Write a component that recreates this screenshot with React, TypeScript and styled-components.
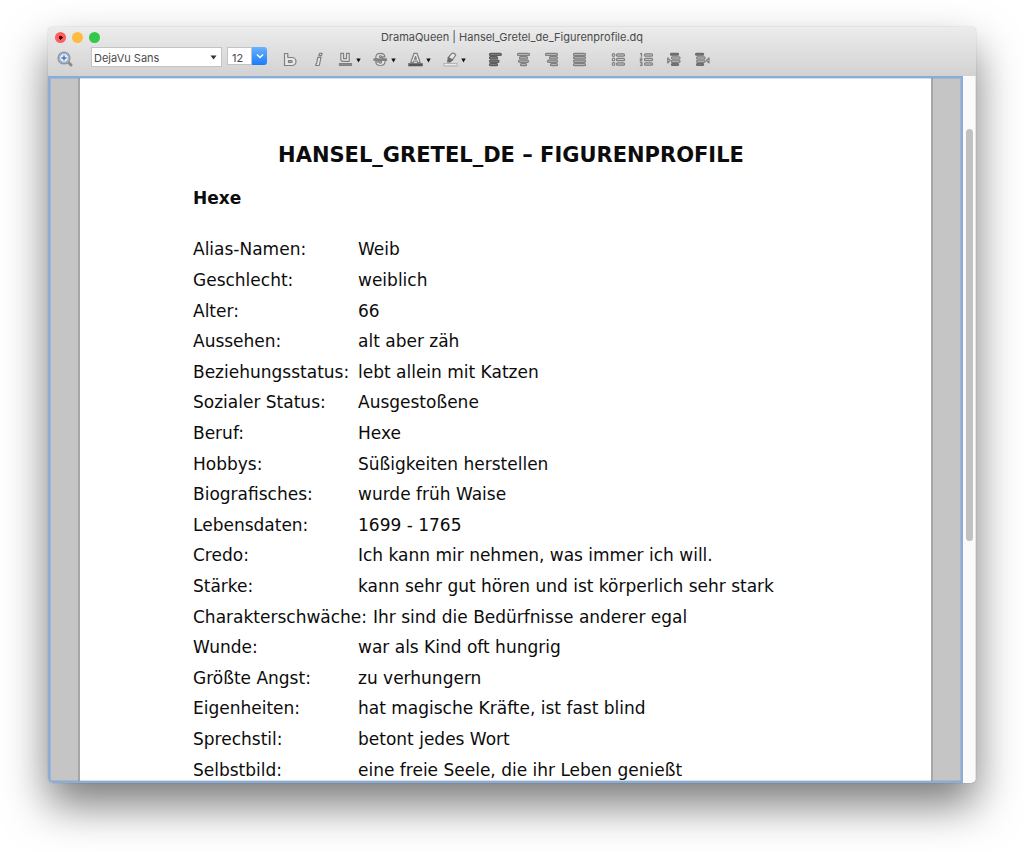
import React from "react";
import styled, { createGlobalStyle, css } from "styled-components";

const GlobalStyle = createGlobalStyle`
  *, *::before, *::after { box-sizing: border-box; }
  html, body, #root { height: 100%; }
  body { margin: 0; background: #fff; }
  button, input, select { margin: 0; font: inherit; color: inherit; }
`;

const Desktop = styled.main`
  display: flex;
  height: 100%;
  padding: 27px 48px 69px;
`;

const Window = styled.section`
  flex: 1;
  min-width: 0;
  display: flex;
  flex-direction: column;
  overflow: hidden;
  border-radius: 5px;
  background: #fafafa;
  box-shadow: 0 0 1px rgba(0, 0, 0, 0.4), 0 22px 44px rgba(0, 0, 0, 0.52);
`;

const Chrome = styled.header`
  flex: none;
  height: 49px;
  background: linear-gradient(#ececec, #d2d2d2);
  color: #4a4a4a;
  font-family: Inter, "Liberation Sans", sans-serif;
`;

const TitleBar = styled.div`
  display: grid;
  grid-template-columns: 1fr auto 1fr;
  align-items: center;
  height: 20px;
  padding: 0 7px;
`;

const Lights = styled.div`
  display: flex;
  gap: 6px;
`;

const Light = styled.button<{ $color: string; $dirty?: boolean }>`
  width: 11px;
  height: 11px;
  padding: 0;
  border: 0;
  border-radius: 50%;
  background: ${(p) =>
    p.$dirty ? `radial-gradient(circle, #4d0000 0 2px, ${p.$color} 2px)` : p.$color};
`;

const Title = styled.h1`
  margin: 0;
  font-size: 11px;
  font-weight: 400;
  line-height: 20px;
`;

const Toolbar = styled.div`
  display: flex;
  align-items: flex-start;
  height: 29px;
  padding-left: 3px;
`;

const ToolButton = styled.button<{ $wide?: boolean }>`
  flex: none;
  display: flex;
  align-items: center;
  justify-content: ${(p) => (p.$wide ? "flex-start" : "center")};
  gap: 3px;
  width: ${(p) => (p.$wide ? 35 : 28)}px;
  height: 24px;
  padding: 0;
  border: 0;
  background: none;
`;

const Group = styled.div<{ $gap: number }>`
  display: flex;
  margin-left: ${(p) => p.$gap}px;
`;

const field = css`
  height: 20px;
  border: 1px solid #c3c3c3;
  border-radius: 0;
  background: #fff;
  font-size: 11px;
`;

const FontField = styled.label`
  display: grid;
  align-items: center;
  width: 131px;
  margin-left: 12px;
  > * { grid-area: 1 / 1; }
  > svg { justify-self: end; margin-right: 5px; pointer-events: none; }
`;

const FontSelect = styled.select`
  ${field}
  appearance: none;
  width: 100%;
  padding: 2px 0 0 2px;
`;

const SizeField = styled.div`
  display: flex;
  margin-left: 5px;
`;

const SizeInput = styled.input`
  ${field}
  width: 25px;
  height: 18px;
  padding: 4px 0 0 4px;
`;

const SizeButton = styled.button`
  display: grid;
  place-items: center;
  width: 15px;
  height: 18px;
  padding: 0;
  border: 0;
  border-radius: 0 3px 3px 0;
  background: linear-gradient(#6ab3fa, #1a7bfb);
`;

const Body = styled.div`
  flex: 1;
  min-height: 0;
  display: flex;
`;

const Viewport = styled.div`
  position: relative;
  flex: 1;
  min-width: 0;
  display: flex;
  padding: 0 28px;
  overflow: hidden;
  border: 2px solid #8aadd8;
  border-radius: 0 0 0 4px;
  background: #c5c5c5;

  &::after {
    content: "";
    position: absolute;
    inset: 0;
    box-shadow: inset 0 0 0 1px rgba(90, 150, 225, 0.3);
    pointer-events: none;
  }
`;

const Sheet = styled.article`
  flex: 1;
  min-width: 0;
  display: flex;
  flex-direction: column;
  padding: 62px 102px 0 113px;
  border: solid #a6a6a6;
  border-width: 0 2px;
  background: #fff;
  color: #0c0c0c;
  font-family: "DejaVu Sans", sans-serif;
  font-size: 17px;
`;

const Heading = styled.h2`
  margin: 0;
  font-size: 21px;
  line-height: 30px;
  text-align: center;
  white-space: nowrap;
`;

const Subheading = styled.h3`
  margin: 13px 0 21px;
  font-size: 17px;
  line-height: 30px;
`;

const Profile = styled.dl`
  flex: 1;
  display: grid;
  grid-auto-rows: 1fr;
  margin: 0 0 -4px;
`;

const Row = styled.div`
  display: flex;
  align-items: center;
  white-space: nowrap;
`;

const Label = styled.dt`
  min-width: 165px;
  padding-right: 6px;
`;

const Value = styled.dd`
  margin: 0;
`;

const Track = styled.div`
  flex: none;
  width: 13px;
  padding: 53px 2px 0 3px;
  border-right: 1px solid #e4e4e4;
`;

const Thumb = styled.div`
  height: 63%;
  border-radius: 4px;
  background: #c1c1c1;
`;

const Caret = () => (
  <svg width="5" height="15" viewBox="0 0 5 15">
    <path d="M0.300 6.500h4.400L2.500 10.500z" fill="#111" />
  </svg>
);

const Glyph = ({ children, dark }: { children: React.ReactNode; dark?: boolean }) => (
  <svg
    width="15"
    height="15"
    viewBox="0 0 15 15"
    fill="#e6e6e6"
    stroke={dark ? "#5c5c5c" : "#808080"}
    strokeWidth="1.2"
    strokeLinejoin="round"
    strokeLinecap="round"
  >
    {children}
  </svg>
);

type Bar = [x: number, width: number];

const Bars = ({ bars, dark }: { bars: Bar[]; dark?: boolean }) => (
  <Glyph dark={dark}>
    {bars.map(([x, w], i) => (
      <rect key={i} x={x} y={1.3 + i * 3.4} width={w} height="2.2" rx="1" fill={dark ? "#7c7c7c" : "#b4b4b4"} />
    ))}
  </Glyph>
);

const ALIGNMENTS: { name: string; bars: Bar[]; dark?: boolean }[] = [
  { name: "Linksbündig", bars: [[1.5, 11.8], [1.5, 8], [1.5, 9.5], [1.5, 8]], dark: true },
  { name: "Zentriert", bars: [[1.5, 12], [3.5, 8], [2.5, 10], [4.5, 6]] },
  { name: "Rechtsbündig", bars: [[1.5, 12], [5.5, 8], [3.5, 10], [6.5, 7]] },
  { name: "Blocksatz", bars: [[1.5, 12], [1.5, 12], [1.5, 12], [1.5, 12]] },
];

const ListBars = () => (
  <>
    {[1.8, 6.3, 10.8].map((y) => (
      <rect key={y} x="5.5" y={y} width="8" height="2.4" rx="1" fill="#c8c8c8" />
    ))}
  </>
);

const IndentBars = ({ x }: { x: number }) => (
  <>
    <rect x={x - 1} y="1.4" width="8" height="1.8" rx="0.8" fill="#777" stroke="#6c6c6c" />
    <rect x={x} y="4.8" width="8.500" height="2.2" rx="1" fill="#c0c0c0" />
    <rect x={x} y="8.2" width="8.500" height="2.2" rx="1" fill="#c0c0c0" />
    <rect x={x} y="11.7" width="7" height="1.8" rx="0.8" fill="#777" stroke="#6c6c6c" />
  </>
);

const PROFILE: [string, string][] = [
  ["Alias-Namen:", "Weib"],
  ["Geschlecht:", "weiblich"],
  ["Alter:", "66"],
  ["Aussehen:", "alt aber zäh"],
  ["Beziehungsstatus:", "lebt allein mit Katzen"],
  ["Sozialer Status:", "Ausgestoßene"],
  ["Beruf:", "Hexe"],
  ["Hobbys:", "Süßigkeiten herstellen"],
  ["Biografisches:", "wurde früh Waise"],
  ["Lebensdaten:", "1699 - 1765"],
  ["Credo:", "Ich kann mir nehmen, was immer ich will."],
  ["Stärke:", "kann sehr gut hören und ist körperlich sehr stark"],
  ["Charakterschwäche:", "Ihr sind die Bedürfnisse anderer egal"],
  ["Wunde:", "war als Kind oft hungrig"],
  ["Größte Angst:", "zu verhungern"],
  ["Eigenheiten:", "hat magische Kräfte, ist fast blind"],
  ["Sprechstil:", "betont jedes Wort"],
  ["Selbstbild:", "eine freie Seele, die ihr Leben genießt"],
];

export default function App() {
  return (
    <>
      <GlobalStyle />
      <Desktop>
        <Window>
          <Chrome>
            <TitleBar>
              <Lights>
                <Light $color="#fc605c" $dirty aria-label="Schließen" />
                <Light $color="#fdbc40" aria-label="Minimieren" />
                <Light $color="#34c84a" aria-label="Maximieren" />
              </Lights>
              <Title>DramaQueen | Hansel_Gretel_de_Figurenprofile.dq</Title>
            </TitleBar>
            <Toolbar>
              <ToolButton aria-label="Vergrößern">
                <svg width="16" height="16" viewBox="0 0 16 16">
                  <path d="M11.500 11.500l2.500 2.500" stroke="#8b8b8b" strokeWidth="3" strokeLinecap="round" />
                  <circle cx="7" cy="7" r="5.8" fill="#e2effc" stroke="#979797" strokeWidth="1.6" />
                  <circle cx="7" cy="7" r="4.4" fill="none" stroke="#8aa6d6" />
                  <path d="M7 4.500v5M4.500 7h5" stroke="#4a72bf" strokeWidth="1.4" />
                </svg>
              </ToolButton>
              <FontField>
                <FontSelect aria-label="Schriftart" defaultValue="DejaVu Sans">
                  <option>DejaVu Sans</option>
                </FontSelect>
                <svg width="7" height="5" viewBox="0 0 7 5">
                  <path d="M0.500 0.500h6L3.500 4.500z" fill="#333" />
                </svg>
              </FontField>
              <SizeField>
                <SizeInput aria-label="Schriftgröße" defaultValue="12" />
                <SizeButton aria-label="Schriftgröße wählen">
                  <svg width="8" height="6" viewBox="0 0 8 6" fill="none" stroke="#fff" strokeWidth="1.5">
                    <path d="M1 1.500l3 3 3-3" />
                  </svg>
                </SizeButton>
              </SizeField>
              <Group $gap={9}>
                <ToolButton aria-label="Fett">
                  <Glyph>
                    <path
                      fillRule="evenodd"
                      d="M1.500 1.500h3.300v4h4.200a4 4 0 0 1 0 8h-7.500zM5.500 8.600v1.800h2.800a.9.900 0 0 0 0-1.800z"
                    />
                  </Glyph>
                </ToolButton>
                <ToolButton aria-label="Kursiv">
                  <Glyph>
                    <path d="M8.500 1.300h2.600l-.6 2.400h-2.600zM6.800 5.300h3.200l-1.700 8.200h-3.600l.4-1.800h.5z" />
                  </Glyph>
                </ToolButton>
              </Group>
              <Group $gap={6}>
                <ToolButton $wide aria-label="Unterstrichen">
                  <Glyph>
                    <path d="M2.800 1.300h2.700v5.400h3v-5.400h2.700v8h-6q-2.400 0-2.400-2.400z" />
                    <path d="M1.500 11.500h12v2h-12z" fill="#8b8b8b" />
                  </Glyph>
                  <Caret />
                </ToolButton>
                <ToolButton $wide aria-label="Durchgestrichen">
                  <Glyph>
                    <path d="M11.800 4.800h-2.800q-.6-1.200-2-.9-1.300.6-.2 1.400l3 1q2.300.9 2.300 3.200-.3 4-4.700 4t-4.700-3.700h2.800q.5 1.400 2 1.300 1.800-.4.700-1.600l-3.200-1.100q-2.200-.9-2.200-3.200.4-3.800 4.600-3.800t4.400 3.400z" />
                    <path d="M1 6.900h12.500v1.400h-12.500z" fill="#888" />
                  </Glyph>
                  <Caret />
                </ToolButton>
                <ToolButton $wide aria-label="Textfarbe">
                  <Glyph>
                    <path
                      fillRule="evenodd"
                      d="M2.800 10.500l3.200-9.200h3l3.200 9.200h-2.600l-.5-1.500h-3.200l-.5 1.500zM7.500 4.500l-.9 2.600h1.800z"
                    />
                    <path d="M.5 11.500h14v2.500h-14z" fill="#575757" stroke="#575757" strokeWidth="0.500" />
                  </Glyph>
                  <Caret />
                </ToolButton>
                <ToolButton $wide aria-label="Hervorheben">
                  <Glyph>
                    <path d="M5.300 5.500l3.500-4.200q2.800-.6 4 1.700l-3.300 4.800z" />
                    <path d="M5.300 5.500q1 2.300 4.200 2.300l-2.500 2.200h-2.300z" fill="#6a6a6a" stroke="#6a6a6a" />
                    <path d="M.8 11.700h13.400v2.200h-13.400z" fill="#fff" stroke="#b4b4b4" />
                  </Glyph>
                  <Caret />
                </ToolButton>
              </Group>
              <Group $gap={3}>
                {ALIGNMENTS.map((a) => (
                  <ToolButton key={a.name} aria-label={a.name}>
                    <Bars bars={a.bars} dark={a.dark} />
                  </ToolButton>
                ))}
              </Group>
              <Group $gap={11}>
                <ToolButton aria-label="Aufzählung">
                  <Glyph>
                    {[3, 7.5, 12].map((y) => (
                      <circle key={y} cx="2.5" cy={y} r="1.3" />
                    ))}
                    <ListBars />
                  </Glyph>
                </ToolButton>
                <ToolButton aria-label="Nummerierung">
                  <Glyph>
                    <path d="M1.500 1.800l1-.5v3M1.300 6h1.500v1.500h-1.500v1.300h1.700M1.300 10.500h1.600v3h-1.600M1.800 12h1" fill="none" />
                    <ListBars />
                  </Glyph>
                </ToolButton>
                <ToolButton aria-label="Einzug vergrößern">
                  <Glyph>
                    <IndentBars x={4.5} />
                    <path d="M.7 6v5l2.600-2.500z" />
                  </Glyph>
                </ToolButton>
                <ToolButton aria-label="Einzug verkleinern">
                  <Glyph>
                    <IndentBars x={1.6} />
                    <path d="M14 6v5l-2.600-2.500z" />
                  </Glyph>
                </ToolButton>
              </Group>
            </Toolbar>
          </Chrome>
          <Body>
            <Viewport>
              <Sheet>
                <Heading>HANSEL_GRETEL_DE – FIGURENPROFILE</Heading>
                <Subheading>Hexe</Subheading>
                <Profile>
                  {PROFILE.map(([label, value]) => (
                    <Row key={label}>
                      <Label>{label}</Label>
                      <Value>{value}</Value>
                    </Row>
                  ))}
                </Profile>
              </Sheet>
            </Viewport>
            <Track>
              <Thumb />
            </Track>
          </Body>
        </Window>
      </Desktop>
    </>
  );
}
